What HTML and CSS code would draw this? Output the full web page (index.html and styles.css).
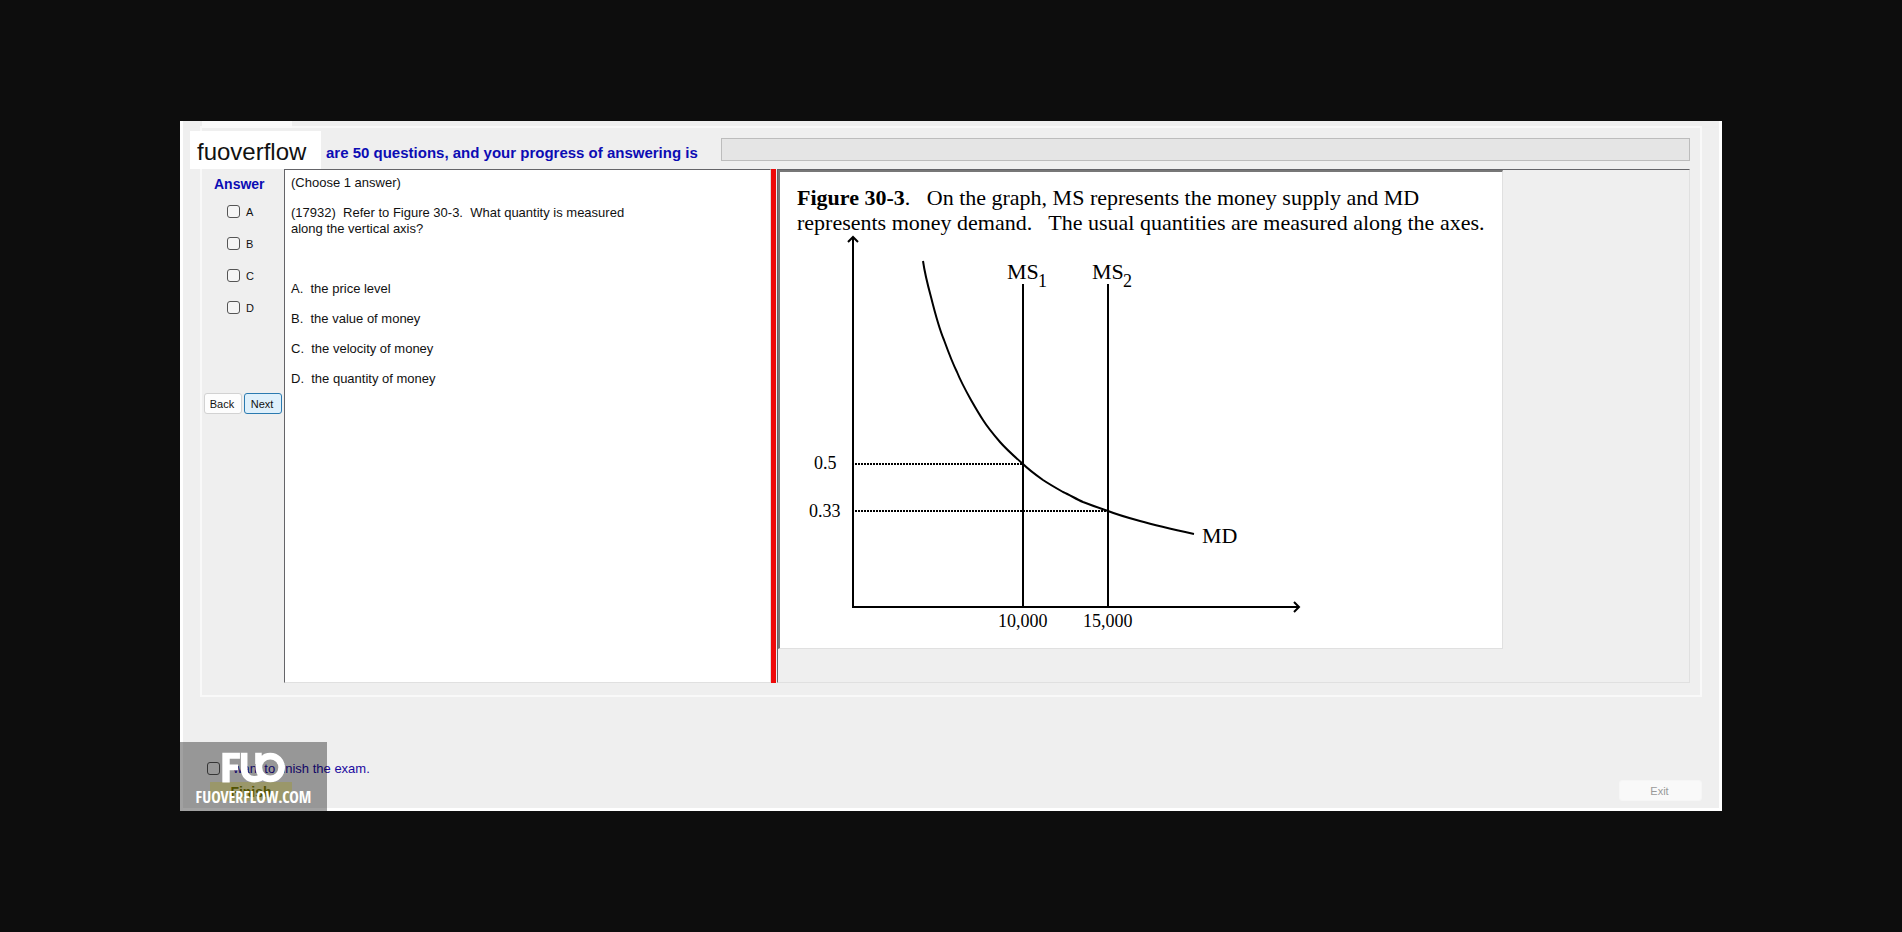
FILE: index.html
```html
<!DOCTYPE html>
<html lang="en">
<head>
<meta charset="utf-8">
<title>Exam</title>
<link rel="stylesheet" href="styles.css">
</head>
<body>
<main class="window">
  <div class="site-tag">fuoverflow</div>
  <section class="group">
    <span class="tab-stub"></span>
    <header class="status">
      <label class="status-text" for="progress">are 50 questions, and your progress of answering is</label>
      <progress class="progress" id="progress" value="0" max="50"></progress>
    </header>
    <div class="workspace">
      <form class="answers">
        <h2 class="answers-title">Answer</h2>
        <label class="choice"><input class="tick" type="checkbox">A</label>
        <label class="choice"><input class="tick" type="checkbox">B</label>
        <label class="choice"><input class="tick" type="checkbox">C</label>
        <label class="choice"><input class="tick" type="checkbox">D</label>
        <div class="nav">
          <button class="btn" type="button">Back</button>
          <button class="btn btn-active" type="button">Next</button>
        </div>
      </form>
      <article class="question">
        <p class="para">(Choose 1 answer)</p>
        <p class="para stem">(17932)&nbsp; Refer to Figure 30-3.&nbsp; What quantity is measured<br>along the vertical axis?</p>
        <p class="para">A.&nbsp; the price level</p>
        <p class="para">B.&nbsp; the value of money</p>
        <p class="para">C.&nbsp; the velocity of money</p>
        <p class="para">D.&nbsp; the quantity of money</p>
      </article>
      <div class="splitter"></div>
      <div class="viewer">
        <figure class="figure">
          <figcaption class="caption"><b>Figure 30-3</b>.&nbsp;&nbsp; On the graph, MS represents the money supply and MD<br>represents money demand.&nbsp;&nbsp; The usual quantities are measured along the axes.</figcaption>
          <svg class="chart" viewBox="780 235 722 413" width="722" height="413">
            <g fill="none" stroke="#000" stroke-width="2">
              <path d="M853 238V607H1298"/>
              <path d="M848 242L853 237L858 242M1294 602L1299 607L1294 612"/>
              <path d="M1023 284V607M1108 284V607"/>
              <path d="M923 261C925 275 928 286 931 297C935 313 939 328 944 340C948 351 952 362 957 372C961 382 966 391 971 400C975 407 979 414 983 420C988 428 994 435 1000 442C1007 450 1015 457 1023 464C1029 470 1036 475 1043 480C1049 484 1056 488 1063 492C1070 495 1076 499 1083 502C1091 505 1099 508 1108 511C1118 515 1129 518 1140 521C1158 526 1176 530 1194 534"/>
              <path d="M855 464H1022M855 511H1107" stroke-dasharray="2 1"/>
            </g>
            <g class="label">
              <text x="1007" y="279">MS</text>
              <text x="1092" y="279">MS</text>
              <text x="1202" y="543">MD</text>
            </g>
            <g class="value">
              <text x="1038" y="287">1</text>
              <text x="1123" y="287">2</text>
              <text x="814" y="469">0.5</text>
              <text x="809" y="517">0.33</text>
              <text x="998" y="627">10,000</text>
              <text x="1083" y="627">15,000</text>
            </g>
          </svg>
        </figure>
      </div>
    </div>
  </section>
  <footer class="footer">
    <div class="finish">
      <label class="finish-check"><input class="tick" type="checkbox">I want to finish the exam.</label>
      <button class="btn-finish" type="button">Finish</button>
    </div>
    <button class="btn btn-exit" type="button" disabled>Exit</button>
  </footer>
  <div class="watermark">
    <svg class="logo" viewBox="136 40 188 92" width="63" height="31">
      <path fill="#fff" d="M137 42H190V60H159V77H184V94H159V131H137Z"/>
      <g fill="none" stroke="#fff" stroke-width="20">
        <path d="M202 42V88C202 110 216 121 232 121C246 121 256 115 263 105"/>
        <path d="M245 42V76"/>
        <circle cx="280" cy="86" r="34"/>
      </g>
      <path fill="none" stroke="#999" stroke-width="2" d="M191 42V92M256 42V50"/>
    </svg>
    <span class="watermark-text">FUOVERFLOW.COM</span>
  </div>
</main>
</body>
</html>
```
FILE: styles.css
```css
* { box-sizing: border-box; }
body {
  margin: 0;
  min-height: 100vh;
  background: #0d0d0d;
  font-family: "Liberation Sans", Arial, sans-serif;
  font-size: 13px;
  color: #111;
  display: flex;
  flex-direction: column;
  justify-content: center;
}
.window {
  position: relative;
  margin: 0 180px;
  padding: 5px 17px 7px 17px;
  background: #efefef;
  border: 3px solid #fff;
  border-top: 0;
}
.site-tag {
  position: absolute;
  z-index: 1;
  left: 7px;
  top: 10px;
  padding: 7px 15px 3px 7px;
  background: #fff;
  color: #111;
  font-size: 24px;
  line-height: 28px;
}
.group {
  position: relative;
  border: 2px solid #f9f9f9;
  padding: 10px 10px 12px 2px;
}
.tab-stub {
  position: absolute;
  left: 0;
  top: -7px;
  width: 90px;
  height: 7px;
  background: #fbfbfb;
}
.status {
  display: flex;
  align-items: center;
  gap: 16px;
  padding-left: 122px;
}
.status-text {
  min-width: 379px;
  color: #0c0cb4;
  font-size: 15px;
  font-weight: bold;
  line-height: 16px;
  padding-top: 6px;
}
.progress {
  appearance: none;
  flex: 1;
  height: 23px;
  border: 1px solid #bcbcbc;
  background: #e5e5e5;
}
.progress::-webkit-progress-bar { background: #e5e5e5; }
.workspace {
  display: flex;
  margin-top: 8px;
}
.answers {
  width: 80px;
  padding-top: 7px;
}
.answers-title {
  margin: 0 0 13px;
  padding-left: 10px;
  color: #0c0cb4;
  font-size: 14px;
  line-height: 16px;
}
.choice {
  display: flex;
  align-items: center;
  gap: 6px;
  height: 13px;
  margin-bottom: 19px;
  padding-left: 23px;
  font-size: 11px;
}
.tick {
  appearance: none;
  flex: none;
  width: 13px;
  height: 13px;
  margin: 0;
  border: 1px solid #555;
  border-radius: 3px;
  background: #f5f5f5;
}
.finish .tick { background: transparent; }
.nav {
  display: flex;
  gap: 2px;
  padding-top: 60px;
}
.btn {
  width: 38px;
  height: 21px;
  padding: 0 2px 0 0;
  border: 1px solid #d2d2d2;
  border-radius: 3px;
  background: #fdfdfd;
  color: #111;
  font-family: inherit;
  font-size: 11px;
}
.btn-active {
  border-color: #2a7ab0;
  background: #dff0fb;
}
.question {
  width: 487px;
  min-height: 514px;
  padding: 5px 6px;
  background: #fff;
  border: 1px solid #e0e0e0;
  border-top: 1px solid #646468;
  border-left: 1px solid #646468;
}
.para {
  margin: 0 0 14px;
  line-height: 16px;
}
.stem { margin-bottom: 44px; }
.splitter {
  width: 5px;
  background: #ee0a0a;
}
.viewer {
  flex: 1;
  margin-left: 1px;
  border: 1px solid #e0e0e0;
  border-top-color: #646468;
  border-left-color: #646468;
}
.figure {
  width: max-content;
  margin: 0;
  padding-top: 13px;
  background: #fff;
  border: 1px solid #e0e0e0;
  border-top: 2px solid #777;
  border-left: 2px solid #777;
}
.caption {
  padding-left: 17px;
  font: 22px/25px "Liberation Serif", "Times New Roman", serif;
  color: #000;
}
.chart {
  display: block;
  font-family: "Liberation Serif", "Times New Roman", serif;
}
.label { font-size: 22px; }
.value { font-size: 18px; }
.footer {
  display: flex;
  justify-content: space-between;
  align-items: flex-end;
  padding-top: 64px;
}
.finish {
  display: flex;
  flex-direction: column;
  gap: 6px;
  padding-left: 7px;
}
.finish-check {
  display: flex;
  align-items: center;
  gap: 6px;
  color: #1c0aa0;
  line-height: 15px;
}
.btn-finish {
  width: 82px;
  height: 19px;
  margin-left: 3px;
  padding: 0;
  border: 0;
  background: #f4f0a8;
  color: #828200;
  font: bold 14px "Liberation Sans", Arial, sans-serif;
}
.btn-exit {
  width: 83px;
  border-color: #f6f6f6;
  background: #f9f9f9;
  color: #999;
}
.watermark {
  position: absolute;
  left: -3px;
  bottom: -3px;
  display: flex;
  flex-direction: column;
  align-items: center;
  gap: 6px;
  width: 147px;
  padding: 10px 0 6px;
  background: rgba(0, 0, 0, 0.37);
}
.watermark-text {
  color: #fff;
  font: bold 16px/16px "Liberation Sans Narrow", "Open Sans Condensed", "DejaVu Sans Condensed", sans-serif;
}
```
